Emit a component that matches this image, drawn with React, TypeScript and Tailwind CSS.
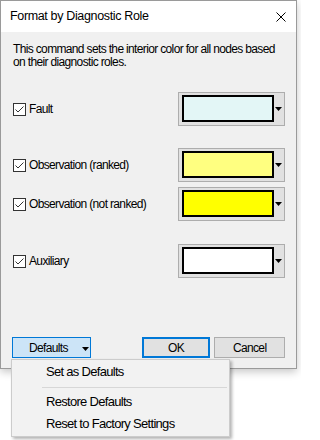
const roles = [
  { label: "Fault", color: "#e3f6f6", gap: "mt-[23px]" },
  { label: "Observation (ranked)", color: "#ffff80", gap: "mt-[22px]" },
  { label: "Observation (not ranked)", color: "#ffff00", gap: "mt-[5px]" },
  { label: "Auxiliary", color: "#ffffff", gap: "mt-[23px]" },
];

function Arrow({ className = "" }: { className?: string }) {
  return (
    <svg width="7" height="4" viewBox="0 0 7 4" className={className}>
      <path d="M0 0H7L3.5 4Z" fill="#000" />
    </svg>
  );
}

function CheckBox() {
  return (
    <span className="flex h-[13px] w-[13px] shrink-0 items-center justify-center border border-[#333] bg-white">
      <svg width="11" height="11" viewBox="0 0 11 11">
        <path d="M1.5 5.5L4 8L9.5 2.5" fill="none" stroke="#333" strokeWidth="1" />
      </svg>
    </span>
  );
}

function ColorPicker({ color }: { color: string }) {
  return (
    <div className="ml-auto flex h-[34px] w-[107px] items-start border border-[#adadad] bg-[#e1e1e1] pl-[3px] pt-[2px]">
      <div className="h-[27px] w-[92px] border-2 border-black" style={{ background: color }} />
      <Arrow className="ml-[1px] mt-[12px]" />
    </div>
  );
}

export default function App() {
  return (
    <div className="relative h-[440px] w-[301px] overflow-hidden bg-white font-['Liberation_Sans',Arial,sans-serif] text-[12px] tracking-[-0.65px] text-black">
      {/* Dialog */}
      <div
        className="flex h-[369px] w-[297px] flex-col border border-[#9a9a9a] bg-[#f0f0f0]"
        style={{ boxShadow: "0 3px 8px rgba(0,0,0,0.22)" }}
      >
        <div className="flex h-[31px] items-center justify-between bg-white pl-[9px] pr-[10px]">
          <span className="text-[12.5px] tracking-[-0.35px]">Format by Diagnostic Role</span>
          <svg width="10" height="10" viewBox="0 0 10 10">
            <path d="M0.5 0.5L9.5 9.5M9.5 0.5L0.5 9.5" stroke="#000" strokeWidth="1" />
          </svg>
        </div>

        <div className="flex flex-col pl-[12px] pr-[11px]">
          <p className="mt-[11px] leading-[13px]">
            This command sets the interior color for all nodes based
            <br />
            on their diagnostic roles.
          </p>

          {roles.map((role) => (
            <div key={role.label} className={`flex items-center ${role.gap}`}>
              <CheckBox />
              <span className="ml-[3px]">{role.label}</span>
              <ColorPicker color={role.color} />
            </div>
          ))}

          {/* Buttons */}
          <div className="-ml-[1px] mt-[59px] flex">
            <button className="flex h-[21px] w-[79px] items-center border border-[#0078d7] bg-[#cce4f7] pl-[16px]">
              <span>Defaults</span>
              <Arrow className="ml-auto mr-[1px] mt-[2px]" />
            </button>
            <button className="ml-[51px] h-[21px] w-[69px] border-2 border-[#0078d7] bg-[#e1e1e1]">OK</button>
            <button className="ml-[4px] h-[21px] w-[71px] border border-[#adadad] bg-[#e1e1e1]">Cancel</button>
          </div>
        </div>
      </div>

      {/* Defaults menu */}
      <div
        className="absolute left-[11px] top-[359px] flex w-[219px] flex-col border border-[#cccccc] bg-[#f2f2f2] py-[1px] text-[13px] tracking-[-0.7px]"
        style={{ boxShadow: "2px 2px 3px rgba(0,0,0,0.3)" }}
      >
        <div className="flex h-[22px] items-center pl-[34px]">Set as Defaults</div>
        <div className="ml-[30px] mr-[2px] mb-[3px] mt-[4px] h-px bg-[#d7d7d7]" />
        <div className="flex h-[22px] items-center pl-[34px]">Restore Defaults</div>
        <div className="flex h-[22px] items-center pl-[34px]">Reset to Factory Settings</div>
      </div>
    </div>
  );
}
